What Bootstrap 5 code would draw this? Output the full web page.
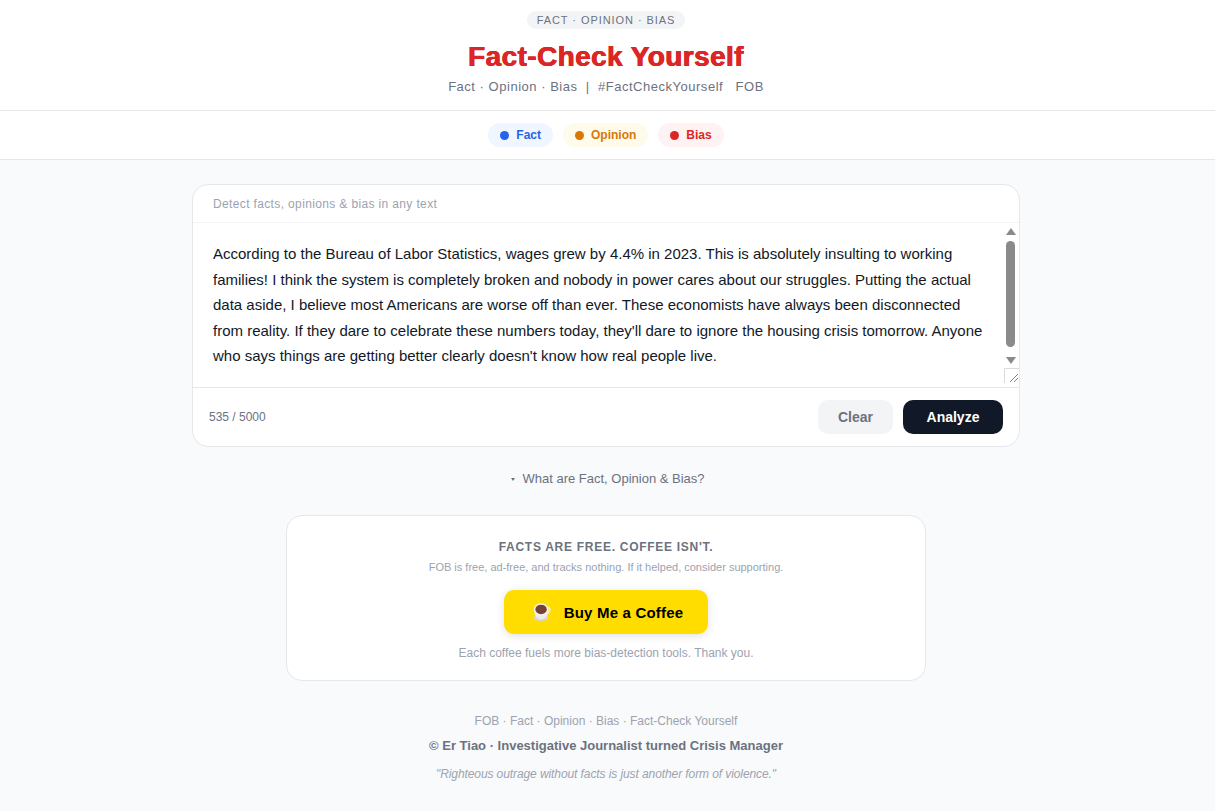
<!DOCTYPE html>
<html lang="en">
<head>
  <meta charset="UTF-8" />
  <meta name="viewport" content="width=device-width, initial-scale=1" />
  <title>Fact-Check Yourself</title>
  <link href="https://cdn.jsdelivr.net/npm/bootstrap@5.3.0/dist/css/bootstrap.min.css" rel="stylesheet" />
  <style>
    body {
      font-family: "Liberation Sans", Arial, sans-serif;
      background-color: #f9fafb;
      color: #111827;
      min-height: 811px;
    }
    .top-head {
      background: #fff;
      height: 111px;
      padding: 11px 3px 0 0;
      border-bottom: 1px solid #e5e7eb;
      text-align: center;
    }
    .tag-pill {
      display: block;
      width: 158px;
      margin: 0 auto;
      background: #f3f4f6;
      color: #6b7280;
      font-size: 11px;
      line-height: 18px;
      letter-spacing: .94px;
      font-weight: 500;
      border-radius: 20px;
    }
    .site-title {
      color: #dc2626;
      font-size: 28px;
      font-weight: 900;
      line-height: 34px;
      margin: 11px 0 4px;
      letter-spacing: .4px;
      -webkit-text-stroke: .2px #dc2626;
      text-shadow: .45px 0 0 #dc2626, -.35px 0 0 #dc2626;
    }
    .site-sub {
      color: #6b7280;
      font-size: 13px;
      line-height: 18px;
      letter-spacing: .52px;
      white-space: pre;
      margin: 0;
    }
    .legend-bar {
      background: #fff;
      height: 49px;
      padding-right: 3px;
      border-bottom: 1px solid #e5e7eb;
    }
    .legend-chip {
      display: inline-flex;
      align-items: center;
      gap: 6px;
      height: 24px;
      padding: 0 12px;
      border-radius: 20px;
      font-size: 12px;
      font-weight: 700;
    }
    .legend-chip i {
      width: 9px;
      height: 9px;
      border-radius: 50%;
      background: currentColor;
      margin-right: 1px;
    }
    .chip-fact { background: #eff6ff; color: #2563eb; }
    .chip-opinion { background: #fffbeb; color: #d97706; }
    .chip-bias { background: #fef2f2; color: #dc2626; }
    .gap-ten { gap: 10px; }
    .page-body { padding-right: 3px; }
    .check-card {
      width: 828px;
      height: 263px;
      margin: 24px auto 0;
      background: #fff;
      border: 1px solid #e5e7eb;
      border-radius: 16px;
      overflow: hidden;
    }
    .check-label {
      height: 38px;
      padding: 0 20px;
      line-height: 38px;
      font-size: 12px;
      letter-spacing: .36px;
      color: #9ca3af;
      border-bottom: 1px solid #f3f4f6;
    }
    .input-wrap { position: relative; height: 164px; }
    .check-input {
      display: block;
      width: 100%;
      height: 160px;
      padding: 18px 35px 18px 20px;
      border: 0;
      outline: 0;
      resize: vertical;
      overflow-y: scroll;
      font-family: inherit;
      font-size: 15px;
      line-height: 25.5px;
      color: #111827;
      background: #fff;
    }
    .check-input::-webkit-resizer {
      background: #fff url("data:image/svg+xml,%3Csvg xmlns='http://www.w3.org/2000/svg' width='15' height='15'%3E%3Cpath d='M.5 15V.5H15' fill='none' stroke='%23dcdcdc'/%3E%3Cpath d='M6 14 14 6M10 14l4-4' stroke='%23666' stroke-width='.8'/%3E%3C/svg%3E");
    }
    /* headless run hides real scrollbars, so this one is drawn over the field */
    .scroll-bar {
      position: absolute;
      top: 5px;
      right: 3px;
      width: 10px;
      pointer-events: none;
    }
    .scroll-up, .scroll-down {
      width: 0;
      border-left: 5px solid transparent;
      border-right: 5px solid transparent;
    }
    .scroll-up { border-bottom: 7px solid #8a8a8a; }
    .scroll-down { border-top: 7px solid #8a8a8a; }
    .scroll-thumb {
      width: 9px;
      height: 106px;
      margin: 6px 0 10px;
      background: #8a8a8a;
      border-radius: 5px;
    }
    .check-foot {
      height: 59px;
      padding: 0 16px;
      border-top: 1px solid #e5e7eb;
    }
    .char-count { font-size: 12px; color: #6b7280; }
    .btn-clear, .btn-run {
      height: 34px;
      padding: 0;
      border: 0;
      border-radius: 10px;
      font-size: 14px;
      font-weight: 700;
    }
    .btn-clear { width: 75px; background: #f3f4f6; color: #6b7280; }
    .btn-run { width: 100px; background: #111827; color: #fff; }
    .explain-box {
      margin-top: 23px;
      text-align: center;
      font-size: 13px;
      line-height: 18px;
      color: #6b7280;
    }
    .explain-box summary { cursor: pointer; list-style: none; padding-left: 4px; }
    .explain-box summary::before {
      content: "";
      display: inline-block;
      vertical-align: 2px;
      margin-right: 7px;
      border: 2.500px solid transparent;
      border-top: 3px solid #6b7280;
      border-bottom: 0;
    }
    .support-box {
      width: 640px;
      height: 166px;
      margin: 27px auto 0;
      padding-top: 24px;
      background: #fff;
      border: 1px solid #e5e7eb;
      border-radius: 16px;
      text-align: center;
    }
    .support-title {
      font-size: 12px;
      font-weight: 700;
      line-height: 14px;
      letter-spacing: .72px;
      color: #6b7280;
      margin: 0 0 6px;
    }
    .support-note {
      font-size: 11px;
      line-height: 14px;
      color: #9ca3af;
      margin: 0 0 16px;
    }
    .coffee-btn {
      display: inline-flex;
      align-items: center;
      justify-content: center;
      gap: 12px;
      width: 204px;
      height: 44px;
      padding: 2px 0 0 3px;
      background: #ffdd00;
      color: #000;
      border-radius: 10px;
      font-size: 15px;
      letter-spacing: .2px;
      font-weight: 700;
      text-decoration: none;
      box-shadow: 0 2px 8px rgba(0, 0, 0, .12);
    }
    .coffee-btn svg { margin-top: -2px; }
    .support-thanks {
      font-size: 12px;
      line-height: 14px;
      color: #9ca3af;
      margin: 12px 0 0;
    }
    .page-foot { margin-top: 33px; padding-right: 3px; text-align: center; }
    .foot-links { font-size: 12px; line-height: 14px; color: #9ca3af; margin: 0 0 10px; }
    .foot-by { font-size: 13px; line-height: 16px; font-weight: 700; color: #6b7280; margin: 0 0 13px; }
    .foot-quote { font-size: 12px; line-height: 14px; letter-spacing: -.09px; font-style: italic; color: #9ca3af; margin: 0; }
  </style>
</head>
<body>
  <header class="top-head">
    <span class="tag-pill">FACT · OPINION · BIAS</span>
    <h1 class="site-title">Fact-Check Yourself</h1>
    <p class="site-sub">Fact · Opinion · Bias  |  #FactCheckYourself   FOB</p>
  </header>

  <div class="legend-bar d-flex justify-content-center align-items-center gap-ten">
    <span class="legend-chip chip-fact"><i></i>Fact</span>
    <span class="legend-chip chip-opinion"><i></i>Opinion</span>
    <span class="legend-chip chip-bias"><i></i>Bias</span>
  </div>

  <main class="page-body">
    <section class="check-card">
      <div class="check-label">Detect facts, opinions &amp; bias in any text</div>
      <div class="input-wrap">
        <textarea class="check-input" spellcheck="false">According to the Bureau of Labor Statistics, wages grew by 4.4% in 2023. This is absolutely insulting to working families! I think the system is completely broken and nobody in power cares about our struggles. Putting the actual data aside, I believe most Americans are worse off than ever. These economists have always been disconnected from reality. If they dare to celebrate these numbers today, they'll dare to ignore the housing crisis tomorrow. Anyone who says things are getting better clearly doesn't know how real people live.</textarea>
        <div class="scroll-bar">
          <div class="scroll-up"></div>
          <div class="scroll-thumb"></div>
          <div class="scroll-down"></div>
        </div>
      </div>
      <div class="check-foot d-flex justify-content-between align-items-center">
        <span class="char-count">535 / 5000</span>
        <div class="d-flex gap-ten">
          <button class="btn-clear" type="button">Clear</button>
          <button class="btn-run" type="button">Analyze</button>
        </div>
      </div>
    </section>

    <details class="explain-box">
      <summary>What are Fact, Opinion &amp; Bias?</summary>
    </details>

    <section class="support-box">
      <p class="support-title">FACTS ARE FREE. COFFEE ISN'T.</p>
      <p class="support-note">FOB is free, ad-free, and tracks nothing. If it helped, consider supporting.</p>
      <a class="coffee-btn" href="#">
        <svg width="20" height="20" viewBox="0 0 22 22" aria-hidden="true">
          <path d="M15.500 6.500c3-1.500 5 .5 4 3-.8 2-3 3.500-5 4" fill="none" stroke="#f1efe9" stroke-width="1.600" />
          <ellipse cx="10" cy="17" rx="8" ry="4" fill="#d9d7d0" />
          <path d="M2.500 8c0 6 2 11 7.500 11s8-5 8-11z" fill="#efede7" />
          <ellipse cx="10" cy="8" rx="8" ry="6.500" fill="#f7f5f0" />
          <ellipse cx="10" cy="8.200" rx="6.300" ry="5.200" fill="#764233" />
        </svg>
        Buy Me a Coffee
      </a>
      <p class="support-thanks">Each coffee fuels more bias-detection tools. Thank you.</p>
    </section>
  </main>

  <footer class="page-foot">
    <p class="foot-links">FOB · Fact · Opinion · Bias · Fact-Check Yourself</p>
    <p class="foot-by">© Er Tiao · Investigative Journalist turned Crisis Manager</p>
    <p class="foot-quote">"Righteous outrage without facts is just another form of violence."</p>
  </footer>
</body>
</html>
